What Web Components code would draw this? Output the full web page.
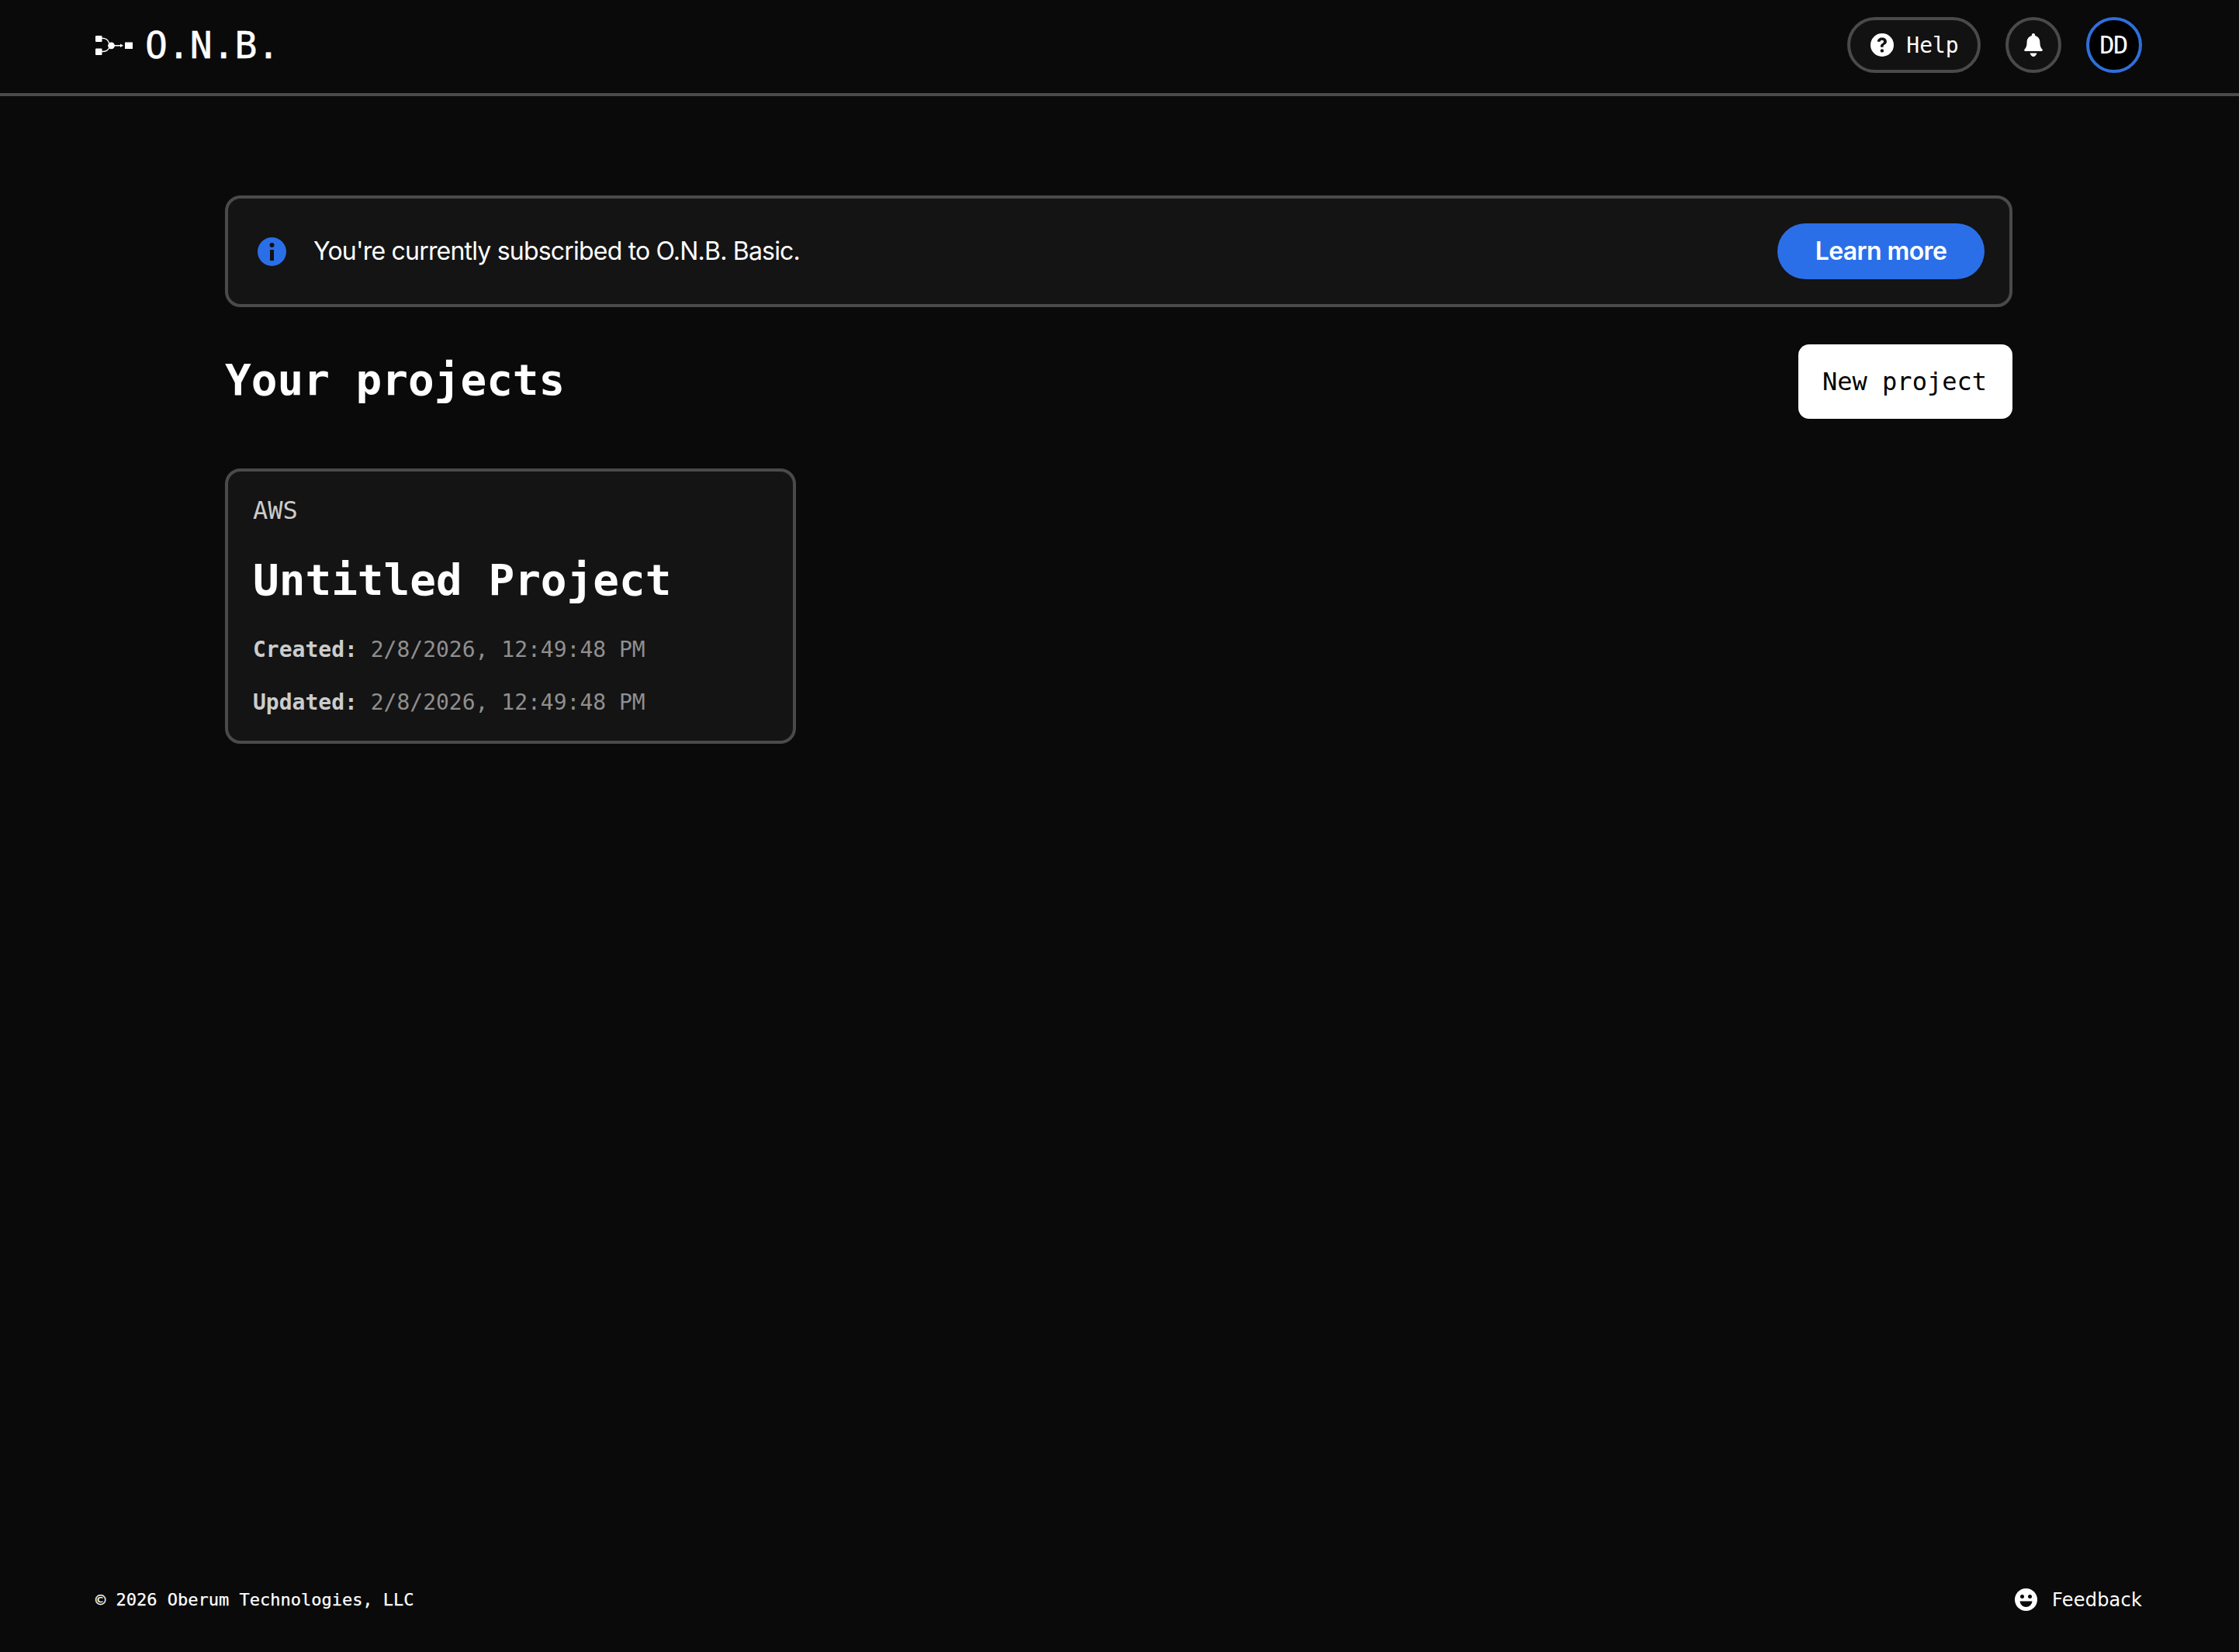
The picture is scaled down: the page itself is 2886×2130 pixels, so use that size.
<!DOCTYPE html>
<html lang="en">
<head>
<meta charset="utf-8">
<title>O.N.B.</title>
<style>
  html, body { margin: 0; background: #0a0a0a; color: #fff; font-family: "DejaVu Sans Mono", monospace; }
  onb-page { min-height: 2130px; }
</style>
</head>
<body>
<onb-page>
  <onb-header></onb-header>
  <onb-banner>You're currently subscribed to O.N.B. Basic.</onb-banner>
  <onb-projects>
    <onb-project-card provider="AWS" name="Untitled Project" created="2/8/2026, 12:49:48 PM" updated="2/8/2026, 12:49:48 PM"></onb-project-card>
  </onb-projects>
  <onb-footer></onb-footer>
</onb-page>
<script>
class OnbPage extends HTMLElement {
  constructor() {
    super();
    this.attachShadow({ mode: "open" });
    this.shadowRoot.innerHTML = `
      <style>
        :host { display: flex; flex-direction: column; }
      </style>
      <slot></slot>
    `;
  }
}

class OnbHeader extends HTMLElement {
  constructor() {
    super();
    this.attachShadow({ mode: "open" });
    this.shadowRoot.innerHTML = `
      <style>
        :host { display: flex; box-sizing: border-box; align-items: center; justify-content: space-between; height: 124px; padding: 0 125px 4px 123px; border-bottom: 4px solid #4a4a4a; font-family: "DejaVu Sans Mono", monospace; }
        .brand { display: flex; align-items: center; gap: 16px; font-size: 48px; line-height: 1; color: #fff; }
        .brand span { -webkit-text-stroke: 0.5px #fff; }
        .brand svg { display: block; margin-top: 2px; }
        .actions { display: flex; align-items: center; gap: 32px; }
        .pill { box-sizing: border-box; height: 72px; border: 4px solid #4a4a4a; border-radius: 36px; background: #121212; display: flex; align-items: center; justify-content: center; color: #fff; font-size: 28px; }
        .help { width: 172px; gap: 16px; padding-left: 2px; }
        .bell { width: 72px; }
        .avatar { width: 72px; background: #000; border-color: #2f6fdc; font-size: 32px; letter-spacing: -1.5px; padding-right: 2px; }
        svg { display: block; }
      </style>
      <div class="brand">
        <svg width="48" height="26" viewBox="0 0 48 26" fill="none">
          <rect x="0" y="0" width="8.5" height="8" rx="1" fill="#fff"/>
          <rect x="0" y="16.5" width="8.5" height="8.5" rx="1" fill="#fff"/>
          <rect x="38" y="8.5" width="10" height="8.5" rx="0.5" fill="#fff"/>
          <circle cx="20.5" cy="12.8" r="4.4" fill="#fff"/>
          <path d="M8 3.2C14 3.2 16 5 18 10M8 20.5C14 20.5 16 19 18 15.5M24 12.8H33" stroke="#fff" stroke-width="1.4"/>
          <path d="M32 10.6L36 12.8L32 15Z" fill="#fff"/>
        </svg>
        <span>O.N.B.</span>
      </div>
      <div class="actions">
        <div class="pill help">
          <svg width="30" height="30" viewBox="0 0 30 30">
            <path fill="#fff" fill-rule="evenodd" d="M15 0a15 15 0 1 1 0 30a15 15 0 0 1 0-30ZM15 5.6c-3.6 0-6 2-6.2 5.2h3.7c.1-1.3 1-2.1 2.4-2.1c1.3 0 2.2.8 2.2 1.9c0 1-.5 1.6-1.8 2.4c-1.6 1-2.4 2-2.3 3.8v.9h3.6v-.7c0-1 .4-1.6 1.8-2.4c1.6-1 2.5-2.2 2.5-4.1c0-2.8-2.4-4.9-5.9-4.9ZM14.9 20.2a2.2 2.2 0 1 0 0 4.4a2.2 2.2 0 0 0 0-4.4Z"/>
          </svg>
          <span>Help</span>
        </div>
        <div class="pill bell">
          <svg width="24" height="30" viewBox="0 0 24 30">
            <path fill="#fff" d="M12 0c1.2 0 2.1.9 2.1 2.1v1c4 1 6.3 4.3 6.3 8.4c0 4.300 1 7.100 3.100 9.200c.7.7.2 2.300-1 2.300H1.500c-1.200 0-1.700-1.600-1-2.300c2.100-2.100 3.100-4.900 3.100-9.200c0-4.100 2.300-7.400 6.300-8.400v-1C9.900.900 10.800 0 12 0Z"/>
            <path fill="#fff" d="M7.500 25.500h9C15.700 28 14 30 12 30s-3.700-2-4.500-4.500Z"/>
          </svg>
        </div>
        <div class="pill avatar">DD</div>
      </div>
    `;
  }
}

class OnbBanner extends HTMLElement {
  constructor() {
    super();
    this.attachShadow({ mode: "open" });
    this.shadowRoot.innerHTML = `
      <style>
        :host { display: flex; box-sizing: border-box; align-items: center; height: 144px; width: 2304px; margin: 128px 0 0 290px; padding: 0 32px 0 38px; background: #141414; border: 4px solid #4a4a4a; border-radius: 20px; color: #fff; font-family: "Inter", sans-serif; }
        svg { display: block; flex: none; }
        .text { margin-left: 35px; margin-bottom: 2px; flex: 1; font-size: 32px; letter-spacing: -0.8px; }
        .more { box-sizing: border-box; width: 267px; height: 72px; border-radius: 36px; background: #2a6fe8; display: flex; align-items: center; justify-content: center; font-size: 32px; font-weight: 600; letter-spacing: -0.6px; padding-bottom: 2px; }
      </style>
      <svg width="37" height="37" viewBox="0 0 37 37">
        <circle cx="18.5" cy="18.5" r="18.5" fill="#2a6fe8"/>
        <circle cx="18.500" cy="10" r="3" fill="#111"/>
        <rect x="16" y="16" width="5" height="14" fill="#111"/>
      </svg>
      <div class="text"><slot></slot></div>
      <div class="more">Learn more</div>
    `;
  }
}

class OnbProjects extends HTMLElement {
  constructor() {
    super();
    this.attachShadow({ mode: "open" });
    this.shadowRoot.innerHTML = `
      <style>
        :host { display: block; flex: 1; width: 2304px; margin: 48px 0 0 290px; font-family: "DejaVu Sans Mono", monospace; }
        .head { display: flex; align-items: center; justify-content: space-between; height: 96px; }
        h1 { margin: 0 0 4px; font-size: 56px; font-weight: 700; line-height: 64px; color: #fff; }
        .new { box-sizing: border-box; width: 276px; height: 96px; border-radius: 14px; background: #fff; color: #000; display: flex; align-items: center; justify-content: center; font-size: 32px; padding-right: 2px; }
        .grid { display: grid; grid-template-columns: 736px; margin-top: 64px; }
      </style>
      <div class="head">
        <h1>Your projects</h1>
        <div class="new">New project</div>
      </div>
      <div class="grid"><slot></slot></div>
    `;
  }
}

class OnbProjectCard extends HTMLElement {
  static get observedAttributes() { return ["provider", "name", "created", "updated"]; }

  constructor() {
    super();
    this.attachShadow({ mode: "open" });
  }

  connectedCallback() {
    this._render();
  }

  attributeChangedCallback() {
    this._render();
  }

  _render() {
    this.shadowRoot.innerHTML = `
      <style>
        :host { display: block; box-sizing: border-box; height: 355px; padding: 30px 32px 0; background: #141414; border: 4px solid #4a4a4a; border-radius: 20px; }
        .provider { font-size: 32px; line-height: 40px; color: #ccc; }
        h2 { margin: 38px 0 0; font-size: 56px; line-height: 64px; font-weight: 700; color: #fff; }
        .row { font-size: 28px; line-height: 36px; color: #8f8f8f; }
        .row b { color: #ccc; font-weight: 700; }
        .created { margin-top: 40px; }
        .updated { margin-top: 32px; }
      </style>
      <div class="provider">${this.getAttribute("provider") || ""}</div>
      <h2>${this.getAttribute("name") || ""}</h2>
      <div class="row created"><b>Created:</b> ${this.getAttribute("created") || ""}</div>
      <div class="row updated"><b>Updated:</b> ${this.getAttribute("updated") || ""}</div>
    `;
  }
}

class OnbFooter extends HTMLElement {
  constructor() {
    super();
    this.attachShadow({ mode: "open" });
    this.shadowRoot.innerHTML = `
      <style>
        :host { display: flex; align-items: center; justify-content: space-between; height: 36px; padding: 0 125px 50px 123px; color: #fff; font-family: "DejaVu Sans Mono", monospace; font-size: 22px; }
        .copy { -webkit-text-stroke: 0.25px #fff; }
        .feedback { display: flex; align-items: center; gap: 19px; font-family: "DejaVu Sans", sans-serif; font-size: 24px; letter-spacing: 0.2px; }
        .feedback span { position: relative; top: 1px; }
        svg { display: block; }
      </style>
      <div class="copy">© 2026 Oberum Technologies, LLC</div>
      <div class="feedback">
        <svg width="29" height="29" viewBox="0 0 29 29">
          <circle cx="14.5" cy="14.5" r="14.500" fill="#fff"/>
          <circle cx="9.500" cy="10.500" r="2.500" fill="#0a0a0a"/>
          <circle cx="19.500" cy="10.500" r="2.500" fill="#0a0a0a"/>
          <path d="M6.500 16.500h16c-.5 4.500-4 7.500-8 7.500s-7.500-3-8-7.500Z" fill="#0a0a0a"/>
        </svg>
        <span>Feedback</span>
      </div>
    `;
  }
}

customElements.define("onb-page", OnbPage);
customElements.define("onb-header", OnbHeader);
customElements.define("onb-banner", OnbBanner);
customElements.define("onb-projects", OnbProjects);
customElements.define("onb-project-card", OnbProjectCard);
customElements.define("onb-footer", OnbFooter);
</script>
</body>
</html>
